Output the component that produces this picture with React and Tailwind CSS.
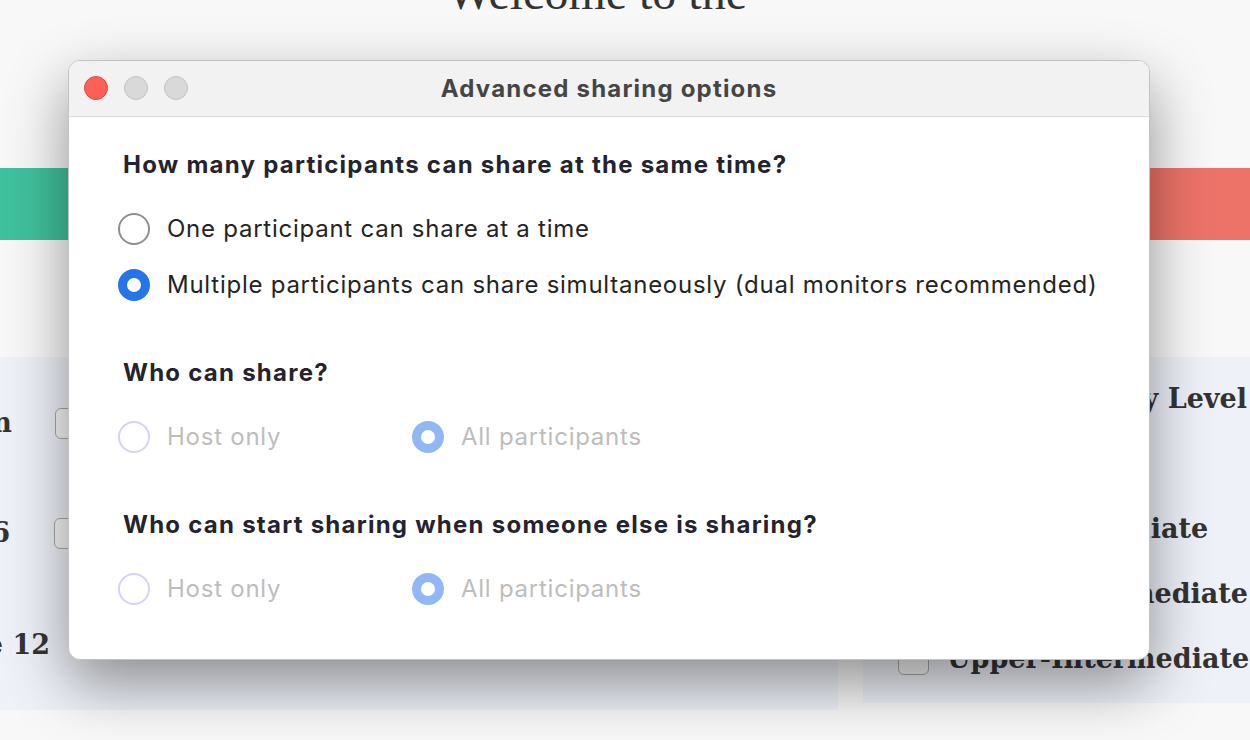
import React from "react";

function Radio({ state }) {
  if (state === "on")
    return <span className="block w-8 h-8 shrink-0 rounded-full border-[9px] border-[#2574e8] bg-white" />;
  if (state === "on-dis")
    return <span className="block w-8 h-8 shrink-0 rounded-full border-[9px] border-[#8fb8f4] bg-white" />;
  if (state === "off-dis")
    return <span className="block w-8 h-8 shrink-0 rounded-full border-2 border-[#d4d2f6] bg-white" />;
  return <span className="block w-8 h-8 shrink-0 rounded-full border-2 border-[#8f8f8f] bg-white" />;
}

function Option({ state, label, disabled, className = "" }) {
  return (
    <div className={"flex items-center h-8 gap-[17px] " + className}>
      <Radio state={state} />
      <span className={"text-[24px] leading-8 tracking-[0.75px] whitespace-nowrap " + (disabled ? "text-[#bdbdbd]" : "text-[#242424]")}>
        {label}
      </span>
    </div>
  );
}

function Heading({ children, className = "" }) {
  return (
    <div className={"pl-[5px] h-8 text-[24px] leading-8 font-bold tracking-[1.25px] text-[#24232f] whitespace-nowrap " + className}>
      {children}
    </div>
  );
}

function Check() {
  return <span className="block w-[31px] h-[31px] shrink-0 rounded-[6px] border border-[#a8a8a8] bg-[#f6f6f6]" />;
}

export default function App() {
  return (
    <div className="relative w-[1250px] h-[740px] overflow-hidden bg-[#f8f8f8] font-['Inter',sans-serif]">
      {/* background page */}
      <div className="h-[168px] flex flex-col">
        <div className="mt-[-35px] pr-[56px] text-center text-[48px] leading-[56px] text-[#333] font-['Liberation_Serif',serif]">
          Welcome to the
        </div>
      </div>
      <div className="flex justify-between h-[72px]">
        <div className="w-[500px] bg-[#40c19d]" />
        <div className="w-[500px] bg-[#ed7369]" />
      </div>
      <div className="flex mt-[117px] gap-[25px] font-['DejaVu_Serif',serif] font-bold text-[27px] text-[#333]">
        <div className="w-[838px] h-[353px] bg-[#eef1f8] overflow-hidden pt-[51px] flex flex-col">
          <div className="flex items-center h-[31px]">
            <div className="w-[12px] flex justify-end whitespace-nowrap"><span>Kindergarten</span></div>
            <div className="ml-[43px]"><Check /></div>
          </div>
          <div className="flex items-center h-[31px] mt-[79px]">
            <div className="w-[10px] flex justify-end whitespace-nowrap"><span>Grade 6</span></div>
            <div className="ml-[44px]"><Check /></div>
          </div>
          <div className="flex items-center h-[31px] mt-[81px]">
            <div className="w-[50px] flex justify-end whitespace-nowrap"><span>Grade 12</span></div>
          </div>
        </div>
        <div className="flex-1 h-[346px] bg-[#eef1f8] overflow-hidden pt-[22px] pl-[35px] flex flex-col">
          <div className="flex justify-end pr-[3px] h-[40px] items-center whitespace-nowrap">English Proficiency Level</div>
          <div className="flex flex-col gap-[34px] mt-[30px]">
            {["Elementary", "Pre-Intermediate", "Lower-Intermediate", "Upper-Intermediate"].map((t) => (
              <div key={t} className="flex items-center h-[31px] gap-[18px] whitespace-nowrap">
                <Check />
                <span>{t}</span>
              </div>
            ))}
          </div>
        </div>
      </div>

      {/* dialog */}
      <div className="absolute left-[68px] top-[60px] w-[1082px] h-[600px] rounded-[12px] bg-white border border-[#c2c2c2] shadow-[0_24px_60px_rgba(0,0,0,0.42)] overflow-hidden flex flex-col">
        <div className="relative h-[56px] shrink-0 bg-[#f2f2f2] border-b border-[#dcdcdc] flex items-center justify-center">
          <div className="absolute left-[15px] top-[15px] flex gap-4">
            <span className="block w-6 h-6 rounded-full bg-[#fe5f57] border border-[#e2463f]" />
            <span className="block w-6 h-6 rounded-full bg-[#d9d9d9] border border-[#c3c3c3]" />
            <span className="block w-6 h-6 rounded-full bg-[#d9d9d9] border border-[#c3c3c3]" />
          </div>
          <span className="text-[24px] font-bold tracking-[1.2px] text-[#454545]">Advanced sharing options</span>
        </div>
        <div className="pl-[49px] pt-[32px] flex flex-col">
          <Heading>How many participants can share at the same time?</Heading>
          <Option className="mt-8" state="off" label="One participant can share at a time" />
          <Option className="mt-6" state="on" label="Multiple participants can share simultaneously (dual monitors recommended)" />
          <Heading className="mt-14">Who can share?</Heading>
          <div className="flex mt-8">
            <Option className="w-[294px]" state="off-dis" label="Host only" disabled />
            <Option state="on-dis" label="All participants" disabled />
          </div>
          <Heading className="mt-14">Who can start sharing when someone else is sharing?</Heading>
          <div className="flex mt-8">
            <Option className="w-[294px]" state="off-dis" label="Host only" disabled />
            <Option state="on-dis" label="All participants" disabled />
          </div>
        </div>
      </div>
    </div>
  );
}
